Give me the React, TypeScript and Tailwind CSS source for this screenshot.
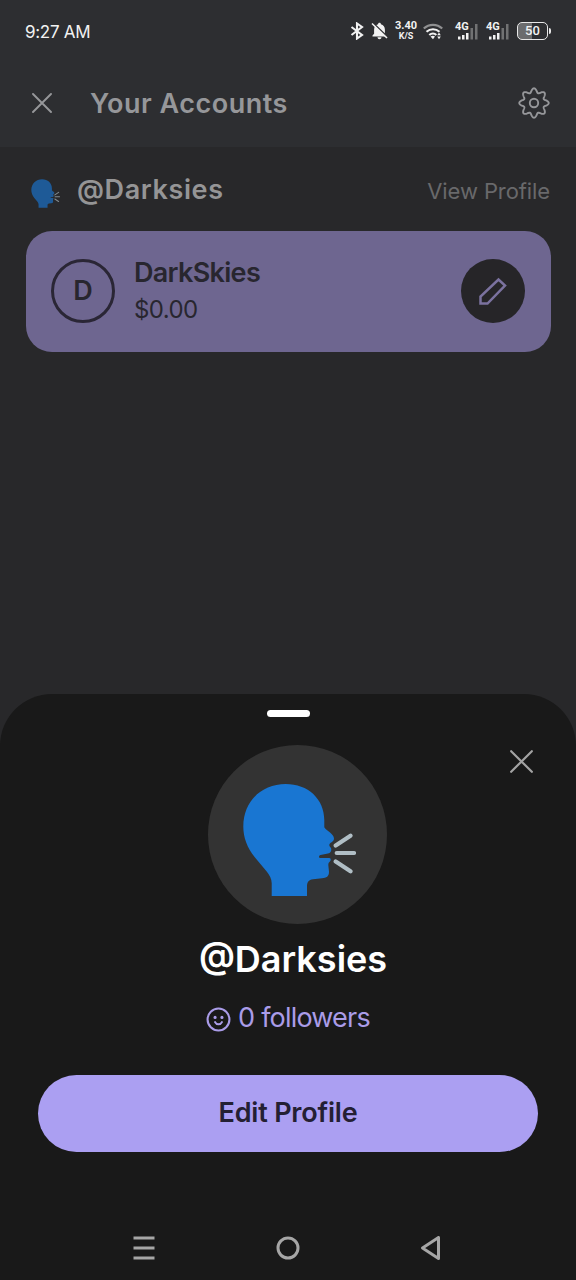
import { clsx } from "clsx";

interface IconProps {
  className?: string;
}

function SpeakingHead({ className }: IconProps) {
  return (
    <svg className={className} viewBox="0 0 114 114" fill="none">
      <path
        fill="#1976d2"
        d="M43.7 1C66 1 82.3 16 82.3 37V44.3C84 47.5 92 51 92 55.5C92 59 87.3 59.5 87.3 62.3C87.3 64 89.3 64.5 89.3 66.3C89.3 68.5 88.5 70 86 70.5L78.5 72C76.5 72.5 76.5 75 78.7 75H87.3C89 75 89 77 88.3 78C87 79.5 86.3 80 86.3 82L87 88.7C87 93.5 84.5 94.7 80 95.3L71 96.3C66.5 97 65 99 65 104V113H29.7V100.3C29.7 95.5 27.5 92 24.7 88.5L13 74.5C5 64.5 1.3 54 1.3 43.7C1.3 18 20 1 43.7 1Z"
      />
      <path
        stroke="#b0bec5"
        strokeWidth={4.2}
        strokeLinecap="round"
        d="M93.7 62.5L108.5 52.7M94.7 70H112M93.7 78.5L108.5 88.3"
      />
    </svg>
  );
}

function CloseIcon({ className }: IconProps) {
  return (
    <svg className={className} viewBox="0 0 20 20" fill="none" stroke="currentColor">
      <path strokeLinecap="round" strokeWidth={1.9} d="M1 1L19 19M19 1L1 19" />
    </svg>
  );
}

// Eight soft teeth around the centre
const gearPath =
  Array.from({ length: 240 }, (_, i) => {
    const a = (i / 240) * Math.PI * 2;
    const r = 12.6 + 2.1 * Math.cos(8 * a);
    return `${i ? "L" : "M"}${(16 + r * Math.cos(a)).toFixed(2)} ${(16 + r * Math.sin(a)).toFixed(2)}`;
  }).join("") + "Z";

function GearIcon({ className }: IconProps) {
  return (
    <svg className={className} viewBox="0 0 32 32" fill="none" stroke="currentColor" strokeWidth={1.9}>
      <path strokeLinejoin="round" d={gearPath} />
      <circle cx={16} cy={16} r={4.2} />
    </svg>
  );
}

function Signal() {
  return (
    <div className="relative h-[18px] w-[23px]">
      <span className="absolute -top-px left-0 font-['Roboto',sans-serif] text-[11px] leading-[11px] font-bold">
        4G
      </span>
      <svg className="h-full w-full" viewBox="0 0 23 18" fill="currentColor">
        <path d="M3 14.5h2.5v3H3zM7 13h2.5v4.500H7zM11 11h2.500v6.500H11z" />
        <path opacity={0.35} d="M15.500 6H18v11.500h-2.500zM20 2h2.500v15.500H20z" />
      </svg>
    </div>
  );
}

function StatusBar() {
  return (
    <div className="flex h-[62px] items-center px-[25px] text-[#f2f2f2]">
      <span className="mt-[3px] text-[17px] tracking-[-0.3px]">9:27 AM</span>
      <div className="ml-auto flex items-center">
        <svg className="h-[18px] w-[14px]" viewBox="0 0 14 18" fill="none" stroke="currentColor" strokeWidth={2.1}>
          <path d="M1.5 5L12 13L7 16.5V1.5L12 5L1.5 13" />
        </svg>
        <svg className="ml-[7px] h-[18px] w-[17px]" viewBox="0 0 16 18" fill="currentColor">
          <path d="M8 .8c.9 0 1.4.6 1.4 1.4 2.6.7 4 2.8 4 5.5v4L15 13.5v.9H1v-.9l1.6-1.8v-4c0-2.7 1.4-4.8 4-5.5C6.6 1.4 7.1.8 8 .8zM6 15.3h4c0 1.2-.9 2-2 2s-2-.8-2-2z" />
          <path d="M1 .5L16 15" stroke="#2d2e31" strokeWidth={1.6} />
          <path d="M.5 1.5L15.5 16" stroke="currentColor" strokeWidth={1.6} />
        </svg>
        <div className="ml-[7px] flex w-[22px] flex-col items-center font-['Roboto',sans-serif] font-bold">
          <span className="text-[11px] leading-[10px]">3.40</span>
          <span className="text-[9px] leading-[10px]">K/S</span>
        </div>
        <svg className="ml-[6px] h-[17px] w-[20px]" viewBox="0 0 20 17" fill="none" stroke="currentColor" strokeWidth={2.2}>
          <path opacity={0.5} d="M.8 5.5C6 .6 14 .6 19.2 5.5" />
          <path d="M3.5 8.8C7.3 5.4 12.7 5.4 16.5 8.8M6.3 12C8.500 10.1 11.5 10.1 13.3 12" />
          <path fill="currentColor" stroke="none" d="M7.5 13.5Q10 12 12 13.5L10 16.3zM14.2 12.300l1.800-2.700 1.800 2.700zM14.2 13.500h3.600l-1.800 2.700z" />
        </svg>
        <div className="ml-[12px] flex gap-[8px]">
          <Signal />
          <Signal />
        </div>
        <div className="ml-[8px] flex h-[18px] w-[31px] items-center justify-center rounded-[5px] border-[1.5px] border-[#e8e8e8] bg-linear-to-r from-[#6b6c6e] from-50% to-transparent to-50% font-['Roboto',sans-serif] text-[13px] font-medium">
          50
        </div>
        <span className="ml-px h-[6px] w-[2px] rounded-r bg-[#e8e8e8]" />
      </div>
    </div>
  );
}

function AccountCard() {
  return (
    <div className="mx-[25.5px] flex h-[121.5px] items-center rounded-[26px] bg-[#6e6690] px-[25.5px] text-[#28262f]">
      <div className="-mt-px flex size-16 items-center justify-center rounded-full border-[3px] border-[#2a2635] pt-px text-[27px] font-semibold">
        D
      </div>
      <div className="ml-[19px] flex flex-col">
        <span className="text-[27px] leading-[37px] font-semibold tracking-[-0.7px]">DarkSkies</span>
        <span className="text-[24px] leading-[38px] tracking-[-0.6px]">$0.00</span>
      </div>
      <div className="-mt-px ml-auto flex size-16 items-center justify-center rounded-full bg-[#262528] text-[#7b729f]">
        <svg className="size-8" viewBox="0 0 32 32" fill="none" stroke="currentColor" strokeWidth={2.5}>
          <path d="M3.500 28.500V21.500L21.500 4.500L28 10.500L10.500 28.500Z" />
        </svg>
      </div>
    </div>
  );
}

function ProfileSheet() {
  return (
    <section className="flex h-[586px] flex-col items-center rounded-t-[52px] bg-[#191919]">
      <div className="mt-4 h-[7px] w-[43px] shrink-0 rounded-full bg-white" />
      <div className="mt-[28.4px] flex w-full items-start justify-between pr-[43px] pl-[208px]">
        <div className="flex size-[179px] items-center justify-center rounded-full bg-[#333333]">
          <SpeakingHead className="mt-[10px] ml-[3px] size-[114px]" />
        </div>
        <CloseIcon className="mt-[5px] size-[23px] text-[#a3a3a3]" />
      </div>
      <h2 className="mt-[11.600px] ml-[10px] text-[36px] leading-[46px] font-semibold text-white">
        @Darksies
      </h2>
      <div className="mt-[18.500px] flex items-center gap-[7px] text-[#aa9ce8]">
        <svg className="mt-[2px] size-[25px]" viewBox="0 0 24 24" fill="none" stroke="currentColor" strokeWidth={2}>
          <circle cx={12} cy={12} r={10.5} />
          <path strokeLinecap="round" d="M8.7 14.5C10 17.2 14 17.2 15.3 14.5" />
          <circle cx={8.7} cy={10} r={1.5} fill="currentColor" stroke="none" />
          <circle cx={15.3} cy={10} r={1.5} fill="currentColor" stroke="none" />
        </svg>
        <span className="text-[27px] leading-[36px] tracking-[-0.8px]">0 followers</span>
      </div>
      <button className="mt-[38.500px] h-[77px] w-[500px] shrink-0 rounded-full bg-[#ab9ff2] text-[27px] font-semibold tracking-[-0.2px] text-[#242033]">
        Edit Profile
      </button>
      <nav className="mt-auto flex h-16 w-full items-center justify-center gap-[120px] pr-[2px] text-[#a6a6a6]">
        {["menu", "home", "back"].map((name) => (
          <svg
            key={name}
            className={clsx("size-6", name === "back" && "-ml-px")}
            viewBox="0 0 24 24"
            fill="none"
            stroke="currentColor"
            strokeWidth={3}
          >
            {name === "menu" && <path d="M1.5 2H22.5M1.5 12H22.5M1.5 22H22.5" />}
            {name === "home" && <circle cx={12} cy={12} r={10} />}
            {name === "back" && <path strokeLinejoin="round" d="M19.5 1.5V22.5L3.5 12Z" />}
          </svg>
        ))}
      </nav>
    </section>
  );
}

export default function App() {
  return (
    <div className="flex h-[1280px] w-[576px] flex-col overflow-hidden bg-[#28282a] font-['Inter',sans-serif]">
      <header className="h-[147px] bg-[#2d2e31]">
        <StatusBar />
        <div className="flex h-[82px] items-center pr-[26px] pl-[32px] text-[#96979a]">
          <CloseIcon className="size-5" />
          <h1 className="mt-[3px] ml-[38px] text-[27px] font-semibold tracking-[0.5px]">Your Accounts</h1>
          <GearIcon className="ml-auto size-8" />
        </div>
      </header>
      <div className="flex h-[83.5px] items-center pr-[26px] pl-[31px]">
        <SpeakingHead className="mt-[9px] size-[29px] opacity-65" />
        <span className="mt-[3px] ml-[17px] text-[27px] font-semibold tracking-[0.6px] text-[#959596]">@Darksies</span>
        <span className="mt-[6px] ml-auto text-[22px] tracking-[-0.1px] text-[#69696b]">View Profile</span>
      </div>
      <AccountCard />
      <main className="flex-1" />
      <ProfileSheet />
    </div>
  );
}
